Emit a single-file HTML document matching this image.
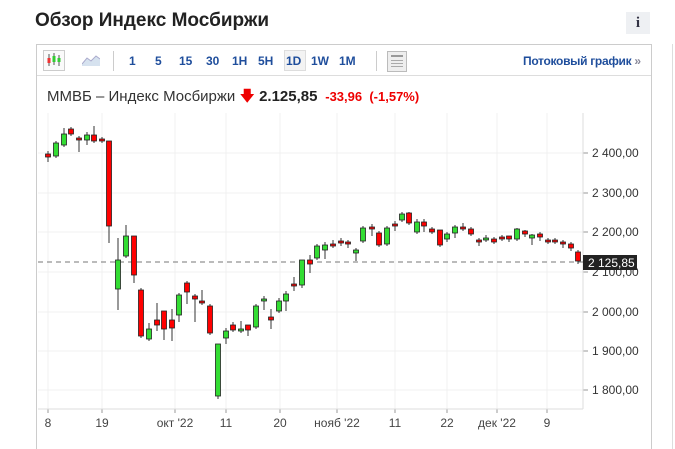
<!DOCTYPE html>
<html style="overflow:hidden;width:675px;height:449px"><head><meta charset="utf-8"><style>
body{margin:0;width:675px;height:449px;background:#fff;font-family:"Liberation Sans",Arial,sans-serif;position:relative;overflow:hidden}
.t{position:absolute;left:35px;top:10px;font-size:19px;font-weight:bold;color:#222}
.i{position:absolute;left:626px;top:12px;width:24px;height:22px;background:#eef0f3;color:#334;font:bold 15px "Liberation Serif",serif;text-align:center;line-height:22px}
.box{position:absolute;left:36px;top:44px;width:614px;height:405px;border:1px solid #ccc;border-bottom:none}
.tb{position:absolute;left:0;top:0;width:614px;height:30px;border-bottom:1px solid #ddd}
.tb span{position:absolute;top:9px;font-size:12px;font-weight:bold;color:#1f4e9c}
.sel{position:absolute;left:247px;top:5px;width:20px;height:19px;background:#f3f3f3;border:1px solid #ddd}
.sep{position:absolute;top:6px;width:1px;height:20px;background:#ccc}
.info{position:absolute;left:47px;top:86px;font-size:15px;color:#333}
.outer{position:absolute;left:672px;top:44px;width:1px;height:405px;background:#ddd}
</style></head><body>
<div class="t">Обзор Индекс Мосбиржи</div>
<div class="i">i</div>
<div class="box">
 <div class="tb">
  <div style="position:absolute;left:6px;top:5px;width:20px;height:19px;border:1px solid #ccc;background:#fafafa"></div>
  <svg style="position:absolute;left:8px;top:7px" width="18" height="16"><g stroke="#555"><line x1="4" y1="2" x2="4" y2="14"/><line x1="9" y1="1" x2="9" y2="13"/><line x1="14" y1="3" x2="14" y2="14"/></g><rect x="2.5" y="6" width="3" height="5" fill="#e33"/><rect x="7.5" y="4" width="3" height="6" fill="#3c3"/><rect x="12.5" y="6" width="3" height="4" fill="#3c3"/></svg>
  <svg style="position:absolute;left:45px;top:9px" width="18" height="12"><path d="M0 10 L5 4 L9 7 L14 2 L18 5 L18 12 L0 12Z" fill="#d6e2ef"/><path d="M0 10 L5 4 L9 7 L14 2 L18 5" stroke="#aac" fill="none"/></svg>
  <div class="sep" style="left:76px"></div>
  <div class="sel"></div>
  <span style="left:92px">1</span><span style="left:118px">5</span><span style="left:142px">15</span><span style="left:169px">30</span><span style="left:195px">1H</span><span style="left:221px">5H</span><span style="left:249px">1D</span><span style="left:274px">1W</span><span style="left:302px">1M</span>
  <div class="sep" style="left:339px"></div>
  <div style="position:absolute;left:350px;top:6px;width:18px;height:19px;border:1px solid #bbb;background:#eee"><div style="margin:3px;height:2px;background:#999"></div><div style="margin:2px 3px;height:1px;background:#aaa"></div><div style="margin:2px 3px;height:1px;background:#aaa"></div><div style="margin:2px 3px;height:1px;background:#aaa"></div></div>
  <span style="left:486px;font-weight:bold;letter-spacing:-0.3px">Потоковый график <span style="position:static;color:#889">»</span></span>
 </div>
</div>
<div class="outer"></div>
<div class="info">ММВБ – Индекс Мосбиржи <span style="color:#e00">🡇</span> <b style="color:#222">2.125,85</b> <span style="color:#e00;font-size:13px;font-weight:bold">&nbsp;-33,96 &nbsp;(-1,57%)</span></div>
<svg id="c" style="position:absolute;left:0;top:0" width="675" height="449"></svg>
<script>
var s='';
var ys=[153,193,232,272,312,351,390],lb=['2 400,00','2 300,00','2 200,00','2 100,00','2 000,00','1 900,00','1 800,00'];
for(var k=0;k<7;k++){s+='<line x1="38" x2="583" y1="'+ys[k]+'" y2="'+ys[k]+'" stroke="#f1f1f1"/><line x1="583" x2="588" y1="'+ys[k]+'" y2="'+ys[k]+'" stroke="#999"/><text x="592" y="'+(ys[k]+4)+'" font-size="12" fill="#333">'+lb[k]+'</text>';}
var xl=[[48,'8'],[102,'19'],[175,'окт \'22'],[226,'11'],[280,'20'],[337,'нояб \'22'],[395,'11'],[447,'22'],[497,'дек \'22'],[547,'9']];
xl.forEach(function(a){s+='<line x1="'+a[0]+'" x2="'+a[0]+'" y1="113" y2="409" stroke="#f1f1f1"/><line x1="'+a[0]+'" x2="'+a[0]+'" y1="409" y2="413" stroke="#999"/><text x="'+a[0]+'" y="427" font-size="12" fill="#444" text-anchor="middle">'+a[1]+'</text>';});
s+='<line x1="38" x2="583" y1="409" y2="409" stroke="#ddd"/><line x1="583" x2="583" y1="113" y2="409" stroke="#ddd"/>';
s+='<line x1="38" x2="583" y1="262" y2="262" stroke="#777" stroke-dasharray="5,4"/>';
var c=[[48,154,157,'r',151,162],[56,143,156,'g'],[64,134,145,'g',128],[71,129,134,'r'],[79,138,140,'r',136,152],[87,135,140,'g',132,145],[94,135,141,'r',126],[102,139,141,'r'],[109,141,226,'r',141,243],[118,260,289,'g',238,310],[126,236,256,'g',225],[134,236,275,'r',236,283],[141,290,336,'r'],[149,329,339,'g',323],[157,320,325,'r',303,331],[164,311,329,'r',311,340],[172,320,328,'r',309,341],[179,295,315,'g',293,322],[187,283,292,'r',281,304],[195,296,299,'r',294,322],[202,301,303,'r',290],[210,306,333,'r'],[218,344,396,'g',344,399],[226,331,338,'g',328,344],[233,325,330,'r',322],[241,329,331,'g',321],[248,325,330,'r',325,336],[256,306,327,'g'],[264,299,301,'g',296,310],[271,317,320,'r',309,329],[279,301,311,'g',298,313],[286,294,301,'g',291,311],[294,284,286,'r',277,291],[302,260,285,'g',260,288],[310,260,264,'r',255,273],[317,246,258,'g'],[325,245,250,'g',242,259],[333,244,246,'r',240],[341,241,243,'r',238,246],[348,242,244,'r',240,248],
[356,250,253,'g',248,261],[363,228,241,'g'],[372,227,229,'r',224,236],[379,233,245,'r'],[387,228,244,'g'],[395,224,226,'r',221,231],[402,214,220,'g'],[409,213,223,'r',212,225],[417,222,232,'g',219,234],[424,222,226,'r',219,232],[432,229,232,'r'],[440,230,245,'r',230,247],[447,234,239,'g',232,242],[455,227,233,'g',225,238],[463,227,229,'r',223,231],[471,229,234,'r'],[479,240,242,'r',238,246],[486,238,240,'g',235],[494,239,242,'r'],[502,237,239,'r'],[509,236,239,'r',236,242],[517,229,239,'g',228,241],[525,231,234,'r',230,237],[532,235,238,'g',234,245],[540,234,237,'r',232,241],[548,240,242,'r'],[555,240,242,'r',238,244],[563,242,244,'r',240,248],[571,244,248,'r',242,251],[578,252,261,'r',250,264]];
c.forEach(function(d){var wt=d[4]||d[1]-2,wb=d[5]||d[2]+2;s+='<line x1="'+d[0]+'" x2="'+d[0]+'" y1="'+wt+'" y2="'+wb+'" stroke="#333"/><rect x="'+(d[0]-2.5)+'" y="'+d[1]+'" width="5" height="'+Math.max(2,d[2]-d[1])+'" fill="'+(d[3]=='r'?'#f00':'#3d3')+'" stroke="#222" stroke-width="0.8"/>';});
s+='<rect x="583" y="255" width="54" height="15" fill="#222"/><text x="588" y="267" font-size="12" fill="#fff">2 125,85</text>';
document.getElementById('c').innerHTML=s;
</script>
</body></html>
